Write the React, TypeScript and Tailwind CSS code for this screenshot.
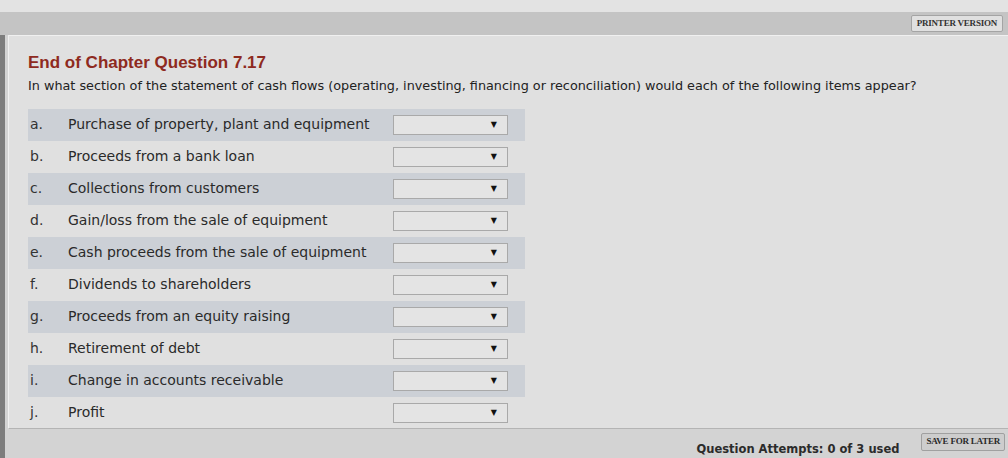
import React from 'react';

const items = [
    { key: 'a.', label: 'Purchase of property, plant and equipment' },
    { key: 'b.', label: 'Proceeds from a bank loan' },
    { key: 'c.', label: 'Collections from customers' },
    { key: 'd.', label: 'Gain/loss from the sale of equipment' },
    { key: 'e.', label: 'Cash proceeds from the sale of equipment' },
    { key: 'f.', label: 'Dividends to shareholders' },
    { key: 'g.', label: 'Proceeds from an equity raising' },
    { key: 'h.', label: 'Retirement of debt' },
    { key: 'i.', label: 'Change in accounts receivable' },
    { key: 'j.', label: 'Profit' },
];

function SectionSelect() {
    return (
        <div className="w-[115px] h-[20px] bg-[#e4e4e4] border border-[#a9a9a9] flex items-center justify-end pr-[10px]">
            <span className="text-[8px] leading-none text-[#111]">▼</span>
        </div>
    );
}

export default function App() {
    return (
        <div className="w-[1008px] h-[458px] overflow-hidden bg-[#cfcfcf] flex flex-col font-['DejaVu_Sans',sans-serif]">
            {/* top strip */}
            <div className="h-[14px] bg-[#e3e3e3]" />
            <div className="h-[26px] bg-[#c4c4c4] flex items-center justify-end pr-[5px]">
                <button className="h-[17px] px-[5px] bg-[#e0e0e0] border border-[#a4a4a4] rounded-[2px] text-[9px] font-bold text-[#333] tracking-tight font-['Liberation_Serif',serif]">
                    PRINTER VERSION
                </button>
            </div>

            <div className="flex flex-1">
                <div className="w-[5px] bg-[#7d7d7d]" />
                <div className="flex-1 flex flex-col bg-[#d3d3d3] pl-[3px]">
                    {/* question panel */}
                    <div className="h-[394px] bg-[#e0e0e0] border-t border-l border-[#f0f0f0] border-b-[#b4b4b4] border-b pl-[19px]">
                        <h2 className="mt-[17px] text-[17px] leading-[20px] font-bold text-[#8e2a20] font-['Liberation_Sans',sans-serif]">
                            End of Chapter Question 7.17
                        </h2>
                        <p className="mt-[5px] text-[12.8px] leading-[16px] text-[#222]">
                            In what section of the statement of cash flows (operating, investing, financing or reconciliation) would each of the following items appear?
                        </p>

                        <div className="mt-[15px] w-[497px] flex flex-col">
                            {items.map((item, index) => (
                                <div
                                    key={item.key}
                                    className={`h-[32px] flex items-center ${index % 2 === 0 ? 'bg-[#ccd0d6]' : ''}`}
                                >
                                    <span className="w-[40px] pl-[2px] text-[14px] text-[#333]">{item.key}</span>
                                    <span className="w-[325px] text-[14px] text-[#2a2a2a]">{item.label}</span>
                                    <SectionSelect />
                                </div>
                            ))}
                        </div>
                    </div>

                    {/* footer */}
                    <div className="flex-1 flex items-start justify-end gap-[22px] pr-[3px] pt-[4px]">
                        <span className="mt-[8px] text-[11.5px] font-bold text-[#2b2b2b]">
                            Question Attempts: 0 of 3 used
                        </span>
                        <button className="h-[18px] px-[4px] bg-[#cdcdcd] border border-[#a0a0a0] rounded-[2px] text-[9px] font-bold text-[#2a2a2a] tracking-tight font-['Liberation_Serif',serif]">
                            SAVE FOR LATER
                        </button>
                    </div>
                </div>
            </div>
        </div>
    );
}
